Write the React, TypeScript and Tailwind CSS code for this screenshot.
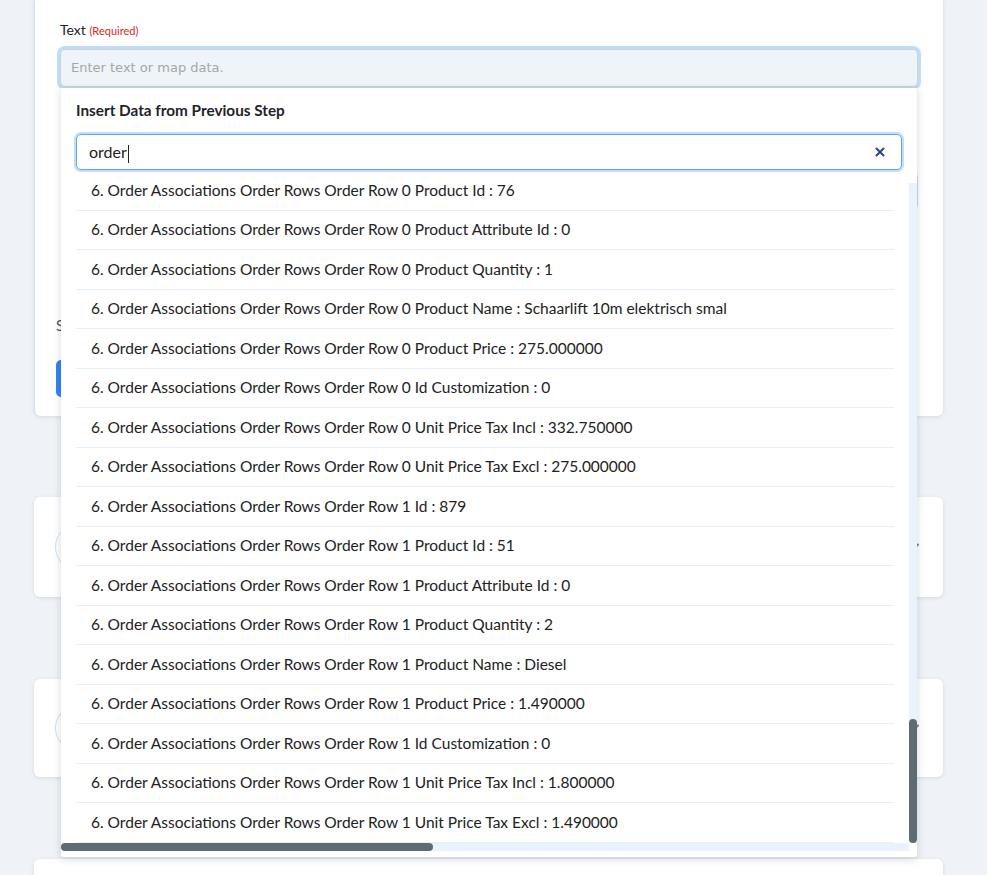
import { X, ChevronDown } from "lucide-react";

const rows = [
  "6. Order Associations Order Rows Order Row 0 Product Id : 76",
  "6. Order Associations Order Rows Order Row 0 Product Attribute Id : 0",
  "6. Order Associations Order Rows Order Row 0 Product Quantity : 1",
  "6. Order Associations Order Rows Order Row 0 Product Name : Schaarlift 10m elektrisch smal",
  "6. Order Associations Order Rows Order Row 0 Product Price : 275.000000",
  "6. Order Associations Order Rows Order Row 0 Id Customization : 0",
  "6. Order Associations Order Rows Order Row 0 Unit Price Tax Incl : 332.750000",
  "6. Order Associations Order Rows Order Row 0 Unit Price Tax Excl : 275.000000",
  "6. Order Associations Order Rows Order Row 1 Id : 879",
  "6. Order Associations Order Rows Order Row 1 Product Id : 51",
  "6. Order Associations Order Rows Order Row 1 Product Attribute Id : 0",
  "6. Order Associations Order Rows Order Row 1 Product Quantity : 2",
  "6. Order Associations Order Rows Order Row 1 Product Name : Diesel",
  "6. Order Associations Order Rows Order Row 1 Product Price : 1.490000",
  "6. Order Associations Order Rows Order Row 1 Id Customization : 0",
  "6. Order Associations Order Rows Order Row 1 Unit Price Tax Incl : 1.800000",
  "6. Order Associations Order Rows Order Row 1 Unit Price Tax Excl : 1.490000",
];

const sans = "font-['Lato','Noto_Sans',sans-serif]";

function StepCard({ className }: { className?: string }) {
  return (
    <div className={"mx-[34px] w-[909px] bg-white rounded-md shadow-[0_1px_4px_rgba(15,40,80,0.12)] flex items-center justify-between pl-[21px] pr-[20px] " + (className || "")}>
      <div className="w-[48px] h-[48px] rounded-full border border-[#cfe0f7]" />
      <ChevronDown className="w-5 h-5 text-[#7a8694]" strokeWidth={2.5} />
    </div>
  );
}

function Dropdown() {
  return (
    <div className="absolute left-[26px] top-[88px] w-[856px] h-[769px] bg-white rounded-b-[3px] shadow-[0_2px_8px_rgba(20,40,80,0.18)] flex flex-col z-10">
      <div className={`px-[15px] pt-[12px] text-[15.3px] font-bold text-[#1f2328] leading-[20px] ${sans}`}>
        Insert Data from Previous Step
      </div>
      <div className="px-[15px] pt-[14px]">
        <div className="h-[36px] rounded-[5px] border border-[#5fa4ef] ring-[2px] ring-[#c4dcf8] flex items-center justify-between pl-[12px] pr-[14px]">
          <span className={`text-[16px] text-[#222] ${sans}`}>
            order<span className="inline-block w-px h-[18px] bg-[#222] align-middle ml-px" />
          </span>
          <X className="w-[14px] h-[14px] text-[#2c4a7c]" strokeWidth={3.5} />
        </div>
      </div>
      <div className="flex flex-1 min-h-0 mt-[1px]">
        <div className="flex-1 overflow-hidden pl-[15px] pr-[15px]">
          {rows.map((r) => (
            <div
              key={r}
              className={`h-[39.5px] border-b border-[#e5f0fb] flex items-center pl-[15px] whitespace-nowrap text-[15.5px] text-[#222] ${sans}`}
            >
              {r}
            </div>
          ))}
        </div>
        <div className="w-[8px] pt-[12px] flex flex-col">
          <div className="flex-1 bg-[#eaf3fd] flex flex-col justify-end">
            <div className="h-[124px] rounded-full bg-[#5f6a72]" />
          </div>
        </div>
      </div>
      <div className="h-[8px] mr-[8px] bg-[#eaf3fd] rounded-l-full">
        <div className="h-full w-[372px] rounded-full bg-[#5f6a72]" />
      </div>
      <div className="h-[6px]" />
    </div>
  );
}

export default function App() {
  return (
    <div className="h-screen bg-[#eff3f7] overflow-hidden relative">
      <div className="relative mx-[34px] w-[909px] bg-white rounded-b-md border-l border-[#d3e2f6] shadow-[0_1px_4px_rgba(15,40,80,0.12)] pt-[20px] px-[21px] pb-[19px]">
        <div className={`pl-[4px] text-[14px] text-[#222] leading-[20px] ${sans}`}>
          Text <span className="text-[11px] text-[#e02424]">(Required)</span>
        </div>
        <div className="mx-[4px] mt-[8px] h-[38px] rounded-[5px] bg-[#eff4f8] border border-[#c9d3dc] ring-[3px] ring-[#c2dbf7] flex items-center px-[10px] text-[13px] text-[#a3a7ab] font-['DejaVu_Sans',sans-serif]">
          Enter text or map data.
        </div>
        <div className="h-[86px]" />
        <div className="h-[36px] border border-[#cfd8e0] rounded-[4px] ml-[5px] w-[857px]" />
        <div className={`mt-[106px] text-[15px] leading-[20px] text-[#555] ${sans}`}>Select</div>
        <div className="mt-[25px] w-[120px] h-[37px] rounded-[5px] bg-[#2f86f6]" />
        <Dropdown />
      </div>
      <StepCard className="mt-[81px] h-[100px]" />
      <StepCard className="mt-[82px] h-[98px]" />
      <StepCard className="mt-[82px] h-[100px]" />
    </div>
  );
}
